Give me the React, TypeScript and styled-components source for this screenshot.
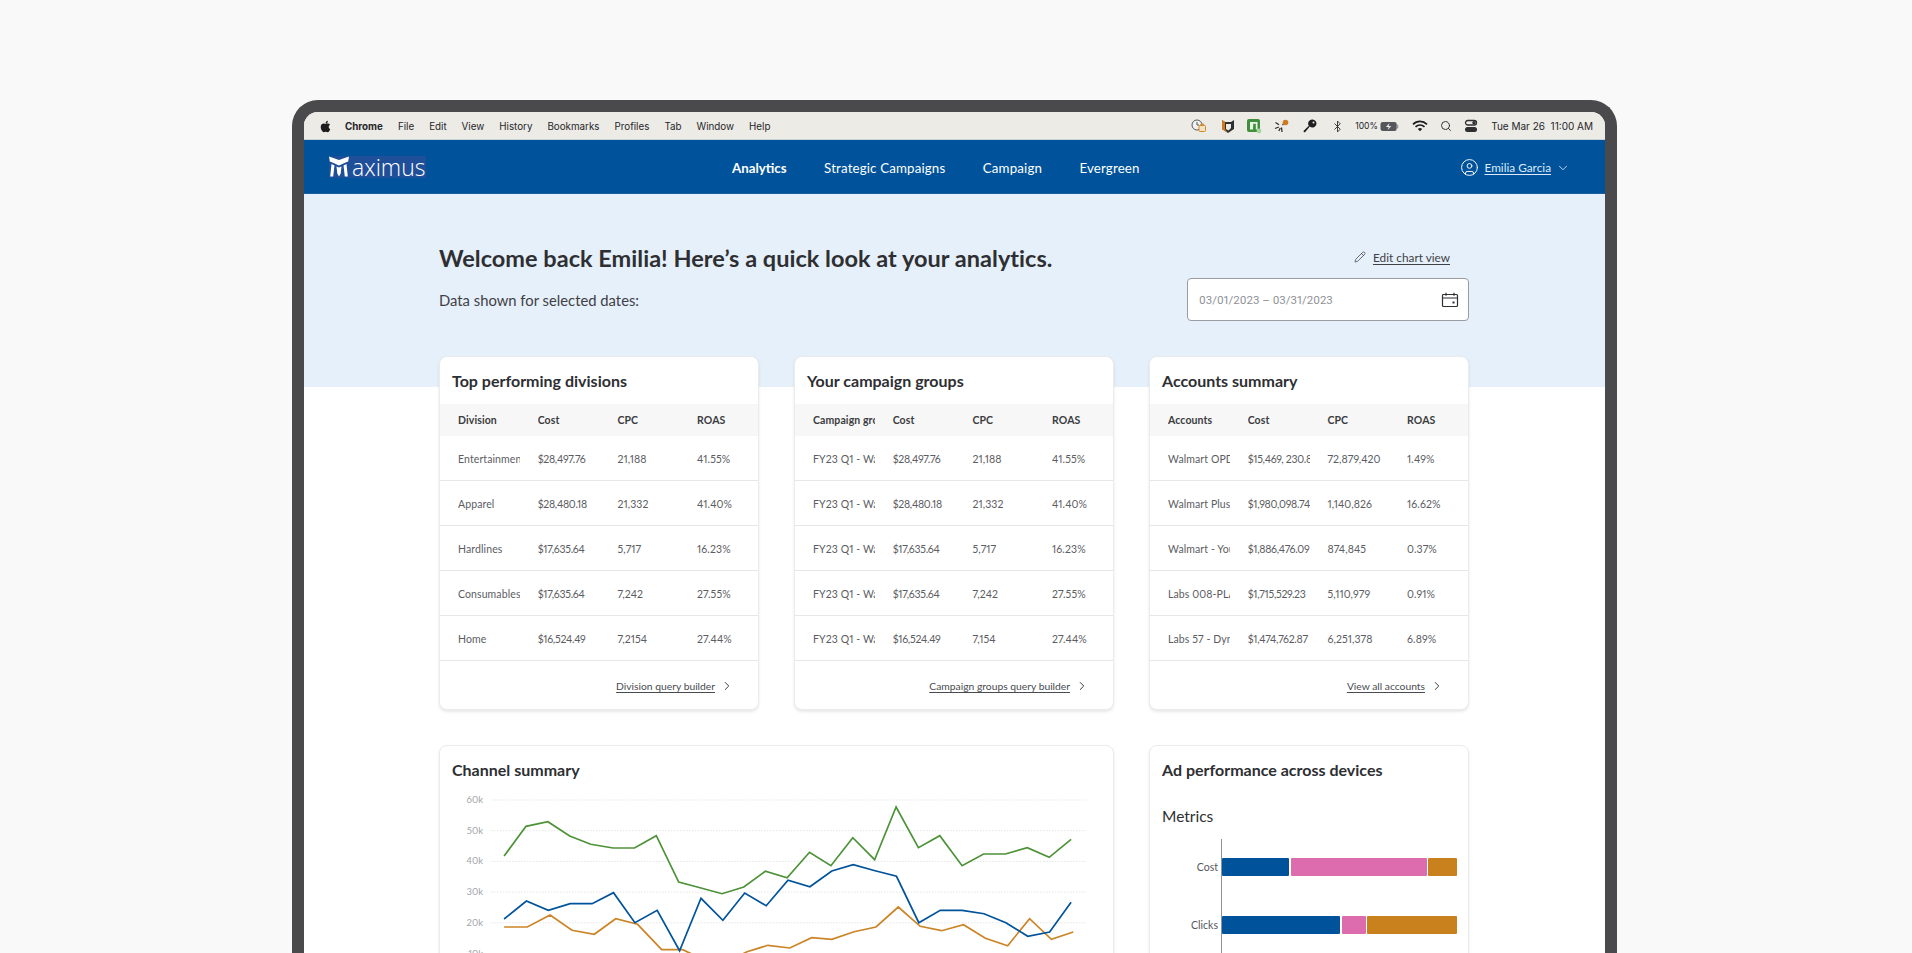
import React from "react";
import styled, { createGlobalStyle } from "styled-components";
import { FaApple } from "react-icons/fa";
import { Bluetooth, ChevronDown, ChevronRight, CircleUser, Pencil, Search } from "lucide-react";

const Global = createGlobalStyle`
  html, body { margin: 0; padding: 0; background: #f9f9f9; overflow: hidden; }
  * { box-sizing: border-box; }
`;

const Page = styled.div`
  height: 953px;
  overflow: hidden;
  padding: 100px 0 0 292px;
  font-family: Lato, "Noto Sans", sans-serif;
  font-variant-numeric: proportional-nums;
  color: #2e2f32;
`;
const Frame = styled.div`
  width: 1325px;
  height: 900px;
  border: 12px solid #4a4a4d;
  border-bottom: 0;
  border-radius: 26px 26px 0 0;
  background: #fff;
  overflow: hidden;
`;
const MenuBar = styled.div`
  height: 28px;
  display: flex;
  align-items: center;
  padding: 1px 12px 0 15px;
  background: #ecebe6;
  border-bottom: 1px solid #c9d2dc;
  font-family: Inter, Roboto, sans-serif;
  font-size: 9.8px;
  color: #26262a;
`;
const AppleMark = styled(FaApple)`
  width: 13px;
  height: 13px;
  margin-right: 13px;
  color: #1d1d1f;
`;
const MenuItem = styled.span<{ $bold?: boolean }>`
  font-weight: ${(p) => (p.$bold ? 700 : 400)};
  margin-right: 15px;
  white-space: nowrap;
`;
const Status = styled.div`
  margin-left: auto;
  display: flex;
  align-items: center;
`;
const Slot = styled.span<{ $w: number }>`
  width: ${(p) => p.$w}px;
  flex: none;
  display: flex;
  align-items: center;
  justify-content: center;
`;
const StatusIcon = styled.svg`
  width: 16px;
  height: 16px;
  flex: none;
`;
const BatteryGroup = styled.span`
  width: 44px;
  margin: 0 8px 0 4px;
  flex: none;
  display: flex;
  align-items: center;
  justify-content: space-between;
  font-size: 8.6px;
`;
const BatteryIcon = styled.svg`
  width: 19px;
  height: 9px;
  flex: none;
`;
const Clock = styled.span`
  white-space: pre;
  font-size: 10px;
  margin-left: 8px;
`;
const Nav = styled.nav`
  height: 54px;
  display: flex;
  align-items: center;
  padding: 2px 35px 0 25px;
  background: #00539b;
  border-bottom: 1px solid #1a5f9f;
  color: #fff;
`;
const Logo = styled.div`
  width: 97px;
  height: 22px;
  margin-top: -2px;
  display: flex;
  align-items: center;
  background: #1f4f98;
`;
const LogoMark = styled.svg`
  width: 20px;
  height: 22px;
  flex: none;
`;
const LogoText = styled.span`
  font-family: "Open Sans", sans-serif;
  font-size: 23px;
  font-weight: 300;
  line-height: 22px;
  margin-left: 3px;
`;
const NavLinks = styled.div`
  display: flex;
  gap: 37.5px;
  margin-left: 306px;
`;
const NavLink = styled.a<{ $active?: boolean }>`
  font-size: 13.3px;
  font-weight: ${(p) => (p.$active ? 700 : 400)};
  letter-spacing: ${(p) => (p.$active ? 0 : 0.15)}px;
  white-space: nowrap;
`;
const User = styled.div`
  margin-left: auto;
  display: flex;
  align-items: center;
  font-size: 11.8px;
`;
const UserName = styled.a`
  margin: 0 5px 0 5px;
  color: #dcebfa;
  text-decoration: underline;
  text-underline-offset: 2px;
`;
const Hero = styled.section`
  height: 193px;
  background: #e6f0fa;
  padding: 46px 0 0 135px;
`;
const HeroInner = styled.div`
  width: 1030px;
`;
const HeroRow = styled.div`
  display: flex;
  justify-content: space-between;
  align-items: center;
`;
const Heading = styled.h1`
  margin: 0;
  font-size: 23.5px;
  font-weight: 700;
  line-height: 36px;
  letter-spacing: 0.02px;
`;
const EditLink = styled.a`
  display: flex;
  align-items: center;
  gap: 7px;
  margin: -2px 19px 0 0;
  font-size: 11.8px;
  color: #3f4045;
  span { text-decoration: underline; text-underline-offset: 2px; }
`;
const SubRow = styled(HeroRow)`
  margin-top: 2px;
`;
const SubText = styled.p`
  margin: 0;
  font-size: 14.8px;
  color: #3f4045;
`;
const DateField = styled.div`
  width: 282px;
  height: 43px;
  display: flex;
  align-items: center;
  justify-content: space-between;
  padding: 0 9px 0 11px;
  background: #fff;
  border: 1px solid #9a9ca1;
  border-radius: 4px;
  font-family: Roboto, sans-serif;
  font-size: 11.5px;
  color: #8f9196;
`;
const Main = styled.main`
  width: 1030px;
  margin: -31px 0 0 135px;
  display: flex;
  flex-direction: column;
  gap: 35px;
`;
const Row = styled.div<{ $cols: string }>`
  display: grid;
  grid-template-columns: ${(p) => p.$cols};
  gap: 35px;
`;
const Card = styled.article`
  background: #fff;
  border: 1px solid #e9ecef;
  border-radius: 8px;
  box-shadow: 0 2px 3px rgba(70, 70, 60, 0.12);
  overflow: hidden;
`;
const CardTitle = styled.h2`
  margin: 0;
  height: 47px;
  padding: 0 12px 1px;
  display: flex;
  align-items: center;
  font-size: 16px;
  font-weight: 700;
  color: #2e2f32;
`;
const TableRow = styled.div<{ $head?: boolean }>`
  display: grid;
  grid-template-columns: repeat(4, 79.7px);
  align-items: center;
  padding: ${(p) => (p.$head ? 0 : 2)}px 0 0 18px;
  height: ${(p) => (p.$head ? 32 : 45)}px;
  background: ${(p) => (p.$head ? "#f7f7f7" : "#fff")};
  border-bottom: ${(p) => (p.$head ? 0 : "1px solid #e6e7e8")};
  font-size: 10.5px;
  font-weight: ${(p) => (p.$head ? 700 : 400)};
  color: ${(p) => (p.$head ? "#3b3c40" : "#5b5d62")};
`;
const Cell = styled.div<{ $tight?: boolean }>`
  width: 62px;
  overflow: hidden;
  white-space: nowrap;
  letter-spacing: ${(p) => (p.$tight ? -0.28 : 0.1)}px;
`;
const CardFooter = styled.div`
  height: 48px;
  display: flex;
  align-items: center;
  justify-content: flex-end;
  gap: 5px;
  padding: 1px 24px 0 0;
  font-size: 10.3px;
  color: #4a4b50;
  a { text-decoration: underline; text-underline-offset: 2px; }
`;
const ChartCard = styled(Card)`
  height: 400px;
`;
const ChartSvg = styled.svg`
  display: block;
  margin-top: -1px;
`;
const AxisLabel = styled.text`
  font-family: Lato, sans-serif;
  font-size: 9.5px;
  fill: #a3a5a9;
`;
const Metrics = styled.h3`
  margin: 11px 12px 0;
  font-size: 15.5px;
  font-weight: 400;
  line-height: 24px;
  color: #2e2f32;
`;
const Bars = styled.div`
  margin: 11px 0 0 71px;
  width: 240px;
  height: 200px;
  border-left: 1px solid #8f9195;
  padding-top: 19px;
  display: flex;
  flex-direction: column;
  gap: 40px;
`;
const BarRow = styled.div`
  position: relative;
  display: flex;
  gap: 1.5px;
  height: 18px;
`;
const BarLabel = styled.span`
  position: absolute;
  right: calc(100% + 4px);
  top: 1px;
  font-size: 10.5px;
  line-height: 16px;
  color: #55575c;
`;
const Segment = styled.div<{ $color: string; $w: number }>`
  width: ${(p) => p.$w}px;
  flex: none;
  background: ${(p) => p.$color};
  border-radius: 1px;
`;

const toPx = (pts: number[][]) =>
  pts.map(([x, y]) => `${(430 + x / 2.24 - 440).toFixed(1)},${(740 + y / 3 - 792).toFixed(1)}`).join(" ");

const green = [[166,348],[215,259],[264,245],[313,288],[360,313],[410,324],[458,324],[507,287],[557,426],[605,443],[654,461],[703,441],[751,394],[800,413],[850,337],[898,377],[947,293],[996,359],[1044,201],[1094,323],[1142,287],[1192,377],[1240,342],[1289,342],[1338,323],[1387,352],[1436,298]];
const blue = [[166,537],[216,483],[265,511],[314,491],[363,491],[411,458],[459,548],[509,511],[559,632],[607,475],[656,541],[705,459],[753,497],[802,421],[851,440],[900,393],[948,374],[997,392],[1045,409],[1095,548],[1143,511],[1192,511],[1241,521],[1290,548],[1339,589],[1388,576],[1436,487]];
const orange = [[166,561],[218,561],[269,525],[318,571],[368,583],[416,536],[465,553],[519,629],[566,629],[615,660],[660,670],[710,635],[757,616],[806,624],[855,593],[900,598],[950,575],[999,561],[1049,501],[1098,559],[1146,572],[1195,554],[1244,595],[1294,617],[1343,536],[1392,598],[1441,576]];

const divisions = [
  ["Entertainment", "$28,497.76", "21,188", "41.55%"],
  ["Apparel", "$28,480.18", "21,332", "41.40%"],
  ["Hardlines", "$17,635.64", "5,717", "16.23%"],
  ["Consumables", "$17,635.64", "7,242", "27.55%"],
  ["Home", "$16,524.49", "7,2154", "27.44%"],
];
const groups = [
  ["FY23 Q1 - Walmart", "$28,497.76", "21,188", "41.55%"],
  ["FY23 Q1 - Walmart", "$28,480.18", "21,332", "41.40%"],
  ["FY23 Q1 - Walmart", "$17,635.64", "5,717", "16.23%"],
  ["FY23 Q1 - Walmart", "$17,635.64", "7,242", "27.55%"],
  ["FY23 Q1 - Walmart", "$16,524.49", "7,154", "27.44%"],
];
const accounts = [
  ["Walmart OPD", "$15,469, 230.89", "72,879,420", "1.49%"],
  ["Walmart Plus", "$1,980,098.74", "1,140,826", "16.62%"],
  ["Walmart - Your", "$1,886,476.09", "874,845", "0.37%"],
  ["Labs 008-PLA", "$1,715,529.23", "5,110,979", "0.91%"],
  ["Labs 57 - Dyn", "$1,474,762.87", "6,251,378", "6.89%"],
];

function SummaryCard(props: { title: string; first: string; rows: string[][]; link: string }) {
  return (
    <Card>
      <CardTitle>{props.title}</CardTitle>
      <TableRow $head>
        {[props.first, "Cost", "CPC", "ROAS"].map((h) => (
          <Cell key={h}>{h}</Cell>
        ))}
      </TableRow>
      {props.rows.map((r, i) => (
        <TableRow key={i}>
          {r.map((c, j) => (
            <Cell key={j} $tight={j === 1}>
              {c}
            </Cell>
          ))}
        </TableRow>
      ))}
      <CardFooter>
        <a>{props.link}</a>
        <ChevronRight size={14} strokeWidth={1.6} color="#2e2f32" />
      </CardFooter>
    </Card>
  );
}

const menus = ["File", "Edit", "View", "History", "Bookmarks", "Profiles", "Tab", "Window", "Help"];

export default function App() {
  return (
    <Page>
      <Global />
      <Frame>
        <MenuBar>
          <AppleMark />
          <MenuItem $bold>Chrome</MenuItem>
          {menus.map((m) => (
            <MenuItem key={m}>{m}</MenuItem>
          ))}
          <Status>
            <Slot $w={32}>
              <StatusIcon viewBox="0 0 16 16">
                <circle cx="6" cy="7" r="5" fill="#f4f3ef" stroke="#55575c" />
                <path d="M6 4v3h2" fill="none" stroke="#55575c" />
                <rect x="8" y="7.500" width="6.500" height="6" rx="1" fill="#f3e3c4" stroke="#d08a2b" />
                <path d="M9.800 7.500V6.200h3v1.300" fill="none" stroke="#d08a2b" />
              </StatusIcon>
            </Slot>
            <Slot $w={26}>
              <StatusIcon viewBox="0 0 16 16">
                <path d="M2 2l3 2h6l3-2v9l-6 4-6-4z" fill="#2e2f32" />
                <path d="M2 2l3 2v7l3 4-6-4z" fill="#d07a20" />
                <path d="M6 6h5v4l-2.500 2.500L6 11z" fill="#ecebe6" />
              </StatusIcon>
            </Slot>
            <Slot $w={26}>
              <StatusIcon viewBox="0 0 16 16">
                <rect x="1" y="1" width="13" height="13" rx="2" fill="#3f8f3c" />
                <path d="M4 4h7.500v7.500h-1.700V5.700H7.200v5.800H4z" fill="#e9f3e6" />
                <path d="M7.200 8.500l2 1.500-2 1.500z" fill="#3f8f3c" />
                <circle cx="13" cy="13" r="2.400" fill="#a8d4a0" />
              </StatusIcon>
            </Slot>
            <Slot $w={30}>
              <StatusIcon viewBox="0 0 16 16">
                <circle cx="11.500" cy="4.500" r="2.800" fill="#d07a20" />
                <path d="M1.500 4.500l3.500 2.200M1 10.500l3.800-1.500M7.500 9.500l.5 4.500M4.800 13l1.500-3M8.500 7l.8-.8" stroke="#2e2f32" strokeWidth="1.300" fill="none" />
              </StatusIcon>
            </Slot>
            <Slot $w={26}>
              <StatusIcon viewBox="0 0 16 16">
                <path d="M10.500 1.500a4 4 0 1 1-2.700 7L3.500 13.700 2 14.500l-.5-1.500 5.300-5.300a4 4 0 0 1 3.700-6.200z" fill="#1f1f22" />
                <circle cx="11.500" cy="4.500" r="1" fill="#ecebe6" />
              </StatusIcon>
            </Slot>
            <Slot $w={28}>
              <Bluetooth size={13} strokeWidth={1.6} />
            </Slot>
            <BatteryGroup>
              100%
              <BatteryIcon viewBox="0 0 20 10">
                <rect x="0" y="0" width="18" height="10" rx="2.500" fill="#55575c" />
                <rect x="18.500" y="3" width="1.200" height="4" fill="#8d8e90" />
                <path d="M10 1L6 5.500h3L8 9l4-4.500H9z" fill="#ecebe6" />
              </BatteryIcon>
            </BatteryGroup>
            <Slot $w={26}>
              <StatusIcon viewBox="0 0 16 16">
                <path d="M1 6.300a10 10 0 0 1 14 0" fill="none" stroke="#1f1f22" strokeWidth="1.700" />
                <path d="M3.500 8.800a6.500 6.500 0 0 1 9 0" fill="none" stroke="#1f1f22" strokeWidth="1.700" />
                <path d="M5.800 11a3.200 3.200 0 0 1 4.400 0L8 13.300z" fill="#1f1f22" />
              </StatusIcon>
            </Slot>
            <Slot $w={26}>
              <Search size={12} strokeWidth={1.8} />
            </Slot>
            <Slot $w={24}>
              <StatusIcon viewBox="0 0 16 16">
                <rect x="2.500" y="2.500" width="11" height="4.500" rx="2.200" fill="none" stroke="#2e2f32" strokeWidth="1.300" />
                <circle cx="11" cy="4.700" r="1.700" fill="#2e2f32" />
                <rect x="2" y="9" width="12" height="5" rx="2.500" fill="#2e2f32" />
              </StatusIcon>
            </Slot>
            <Clock>{"Tue Mar 26  11:00 AM"}</Clock>
          </Status>
        </MenuBar>
        <Nav>
          <Logo>
            <LogoMark viewBox="0 0 20 22">
              <path d="M0 0.500l10 3.500L20 .5l-.8 5-2.600 1-6.600 3-6.600-3-2.600-1z" fill="#fff" />
              <path d="M2.500 8l3 1.500L4.200 20.500H1.200zM17.500 8l-3 1.500 1.300 11h3zM7.500 10.500l2.500 1 2.500-1-.8 7-1.700 3-1.700-3z" fill="#fff" />
            </LogoMark>
            <LogoText>aximus</LogoText>
          </Logo>
          <NavLinks>
            <NavLink $active>Analytics</NavLink>
            <NavLink>Strategic Campaigns</NavLink>
            <NavLink>Campaign</NavLink>
            <NavLink>Evergreen</NavLink>
          </NavLinks>
          <User>
            <CircleUser size={19} strokeWidth={1.2} />
            <UserName>Emilia Garcia</UserName>
            <ChevronDown size={14} strokeWidth={1.3} />
          </User>
        </Nav>
        <Hero>
          <HeroInner>
            <HeroRow>
              <Heading>Welcome back Emilia! Here’s a quick look at your analytics.</Heading>
              <EditLink>
                <Pencil size={12} strokeWidth={1.5} />
                <span>Edit chart view</span>
              </EditLink>
            </HeroRow>
            <SubRow>
              <SubText>Data shown for selected dates:</SubText>
              <DateField>
                03/01/2023 – 03/31/2023
                <svg width="18" height="16" viewBox="0 0 18 16" fill="none" stroke="#2e2f32" strokeWidth="1.200">
                  <rect x="1.500" y="2.500" width="15" height="12" rx="1" />
                  <path d="M1.500 6h15M5 .8v3M13 .8v3" />
                  <rect x="11.500" y="9.500" width="2" height="2" fill="#2e2f32" stroke="none" />
                </svg>
              </DateField>
            </SubRow>
          </HeroInner>
        </Hero>
        <Main>
          <Row $cols="320px 320px 320px">
            <SummaryCard title="Top performing divisions" first="Division" rows={divisions} link="Division query builder" />
            <SummaryCard title="Your campaign groups" first="Campaign group" rows={groups} link="Campaign groups query builder" />
            <SummaryCard title="Accounts summary" first="Accounts" rows={accounts} link="View all accounts" />
          </Row>
          <Row $cols="675px 320px">
            <ChartCard>
              <CardTitle>Channel summary</CardTitle>
              <ChartSvg width="672" height="180" viewBox="0 0 672 180">
                {[60, 50, 40, 30, 20, 10].map((v, i) => {
                  const y = 8 + i * 30.7;
                  return (
                    <g key={v}>
                      <line x1="51" x2="646" y1={y} y2={y} stroke="#e4e5e6" strokeDasharray="1.500 1.500" />
                      <AxisLabel x="43" y={y + 3} textAnchor="end">
                        {v}k
                      </AxisLabel>
                    </g>
                  );
                })}
                <polyline points={toPx(green)} fill="none" stroke="#4d9238" strokeWidth="1.700" />
                <polyline points={toPx(orange)} fill="none" stroke="#cc8526" strokeWidth="1.700" />
                <polyline points={toPx(blue)} fill="none" stroke="#00539b" strokeWidth="1.700" />
              </ChartSvg>
            </ChartCard>
            <ChartCard>
              <CardTitle>Ad performance across devices</CardTitle>
              <Metrics>Metrics</Metrics>
              <Bars>
                <BarRow>
                  <BarLabel>Cost</BarLabel>
                  <Segment $color="#00539b" $w={67} />
                  <Segment $color="#dc6cae" $w={136} />
                  <Segment $color="#c8811c" $w={29} />
                </BarRow>
                <BarRow>
                  <BarLabel>Clicks</BarLabel>
                  <Segment $color="#00539b" $w={118} />
                  <Segment $color="#dc6cae" $w={24} />
                  <Segment $color="#c8811c" $w={90} />
                </BarRow>
              </Bars>
            </ChartCard>
          </Row>
        </Main>
      </Frame>
    </Page>
  );
}
